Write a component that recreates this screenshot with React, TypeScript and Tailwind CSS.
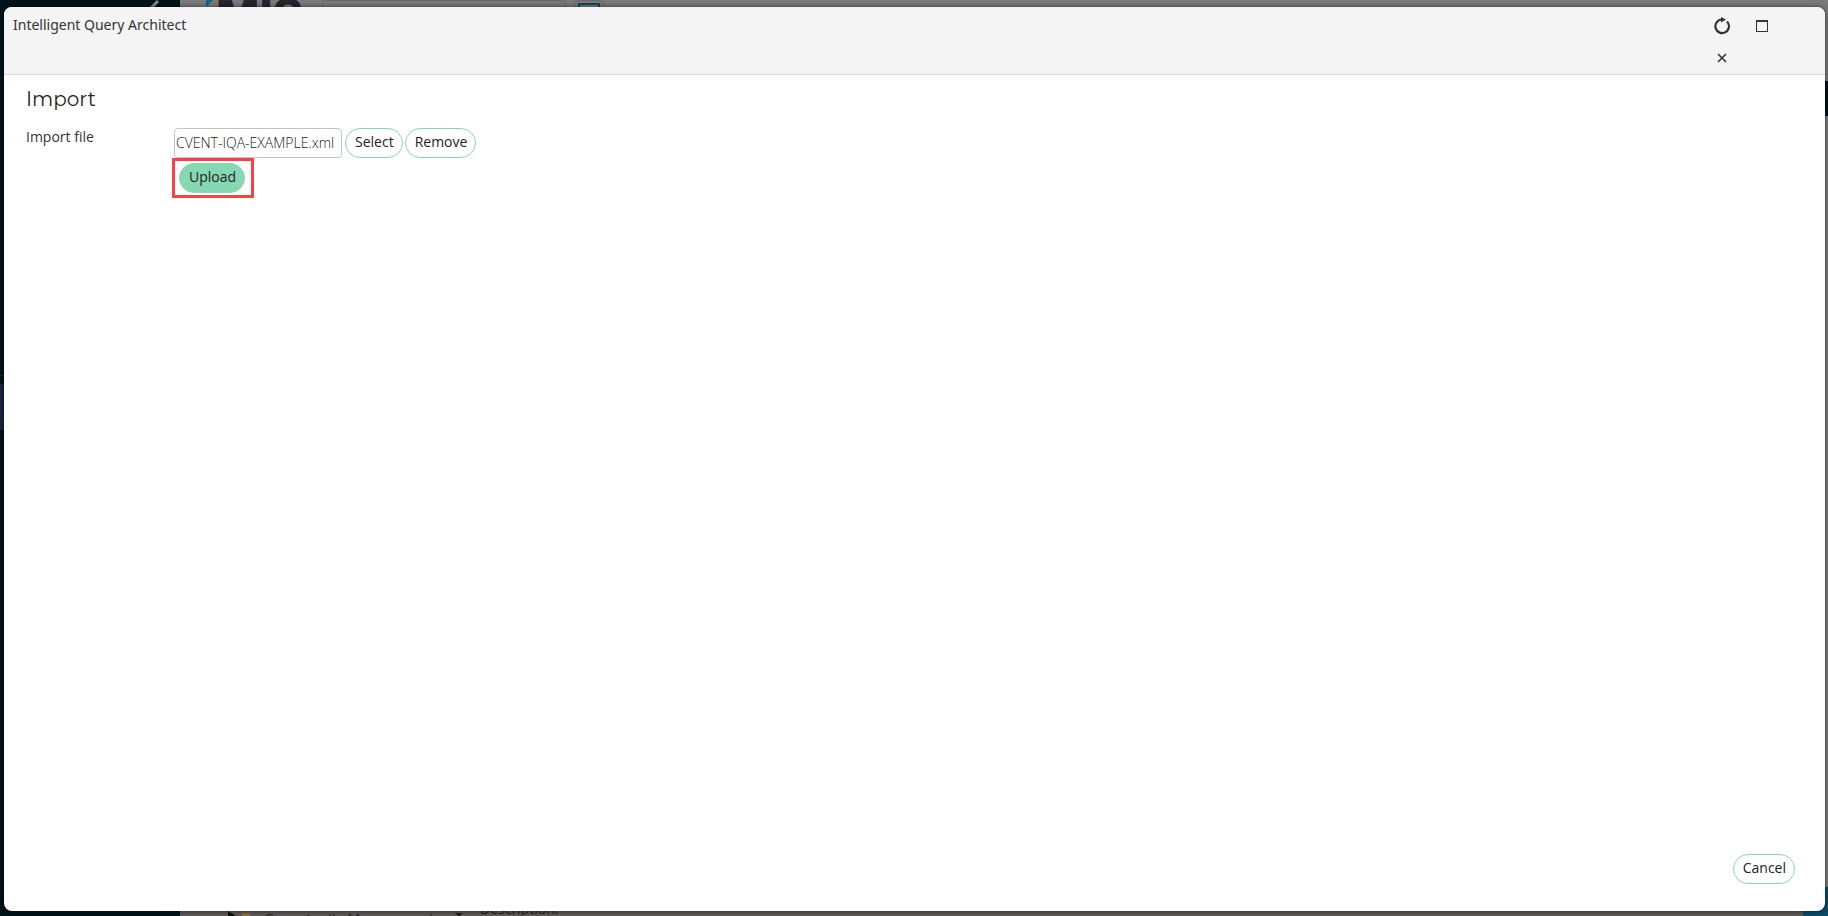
import type { ReactNode } from "react";

interface PillProps {
    children: ReactNode;
    filled?: boolean;
}

function PillButton({ children, filled = false }: PillProps) {
    return (
        <button
            type="button"
            className={`flex h-[30px] items-center rounded-full border border-[#86d8b3] pr-[8px] pb-[2px] pl-[9px] text-[14px] text-[#222] ${filled ? "bg-[#86d8b3]" : "bg-white"}`}
        >
            {children}
        </button>
    );
}

// The page that the dialog dims and covers; only its edges show.
function PageBehind() {
    return (
        <div className="absolute inset-0 flex bg-[#7a7a7a]" aria-hidden="true">
            <div className="flex w-[180px] flex-col bg-[#00131a]">
                <svg className="ml-[150px] h-[7px] w-[10px]" viewBox="0 0 10 7">
                    <path d="M8 1L1 8" stroke="#808a8e" strokeWidth="3" />
                </svg>
                <div className="h-[369px] border-[#1a2a30] border-b" />
                <div className="mt-[8px] h-[46px] bg-[#1e2442]" />
            </div>
            <div className="flex flex-1 flex-col justify-between overflow-hidden">
                <div className="flex h-[7px] items-start overflow-hidden">
                    <svg className="ml-[25px] h-[7px] w-[8px]" viewBox="0 0 8 7">
                        <path d="M1 0h7L1 7z" fill="#12658a" />
                    </svg>
                    <span className="-mt-[8px] ml-[3px] w-[92px] font-['Inter',sans-serif] font-extrabold text-[#25262d] text-[46px] leading-[46px]">MIS</span>
                    <div className="ml-[14px] h-[12px] w-[244px] shrink-0 rounded border border-[#686868]" />
                    <div className="ml-[8px] h-[12px] w-[30px] shrink-0 rounded border border-[#686868] px-[3px] pt-[2px]">
                        <div className="h-[8px] border-2 border-[#12495e]" />
                    </div>
                </div>
                <div className="flex h-[5px] items-start overflow-hidden bg-[#5c5858] pl-[48px] text-[#222] text-[14px] leading-[20px]">
                    <svg className="h-[5px] w-[30px]" viewBox="0 0 30 5">
                        <path d="M0 0l8 5H0z" fill="#111" />
                        <path d="M14 2h7l2 3h-9z" fill="#807438" />
                    </svg>
                    <span className="-mt-[2px] ml-[6px] w-[191px]">Opportunity Management</span>
                    <svg className="h-[5px] w-[8px]" viewBox="0 0 8 5">
                        <path d="M0 2h8L4 6z" fill="#222" />
                    </svg>
                    <span className="-mt-[12px] ml-[17px] font-medium">Description:</span>
                </div>
            </div>
            <div className="flex w-[25px] flex-col justify-between">
                <div className="mt-[81px] h-[35px] bg-[#00131a]" />
                <div className="h-[29px] bg-[#0a4b68]" />
            </div>
        </div>
    );
}

export default function App() {
    return (
        <div className="relative flex min-h-screen pt-[7px] pr-[3px] pb-[5px] pl-[4px] font-['Open_Sans',sans-serif] text-[14px] leading-[20px]">
            <PageBehind />
            <div role="dialog" aria-labelledby="dialog-title" className="relative flex flex-1 flex-col overflow-hidden rounded-lg bg-white shadow-[0_0_5px_rgba(0,0,0,0.6)]">
                <header className="flex h-[68px] justify-between border-[#d9d9d9] border-b bg-[#f4f4f4] pl-[9px]">
                    <h1 id="dialog-title" className="pt-[8px] font-['Noto_Sans',sans-serif] text-[#333]">
                        Intelligent Query Architect
                    </h1>
                    <div className="mt-px mr-[43px] grid h-[64px] w-[80px] grid-cols-2 text-[#333]">
                        <button type="button" aria-label="Reload" className="flex items-center justify-center">
                            <svg className="h-[18px] w-[18px]" viewBox="0 0 18 18" fill="none">
                                <path d="M14 4.5A6.8 6.8 0 1 1 9 2.5" stroke="currentColor" strokeWidth="2.2" />
                                <path d="M8 0l5 2.5-5 3z" fill="currentColor" />
                            </svg>
                        </button>
                        <button type="button" aria-label="Maximize" className="flex items-center justify-center">
                            <svg className="h-[12px] w-[12px]" viewBox="0 0 12 12">
                                <path d="M0 0h12v12H0zM1 2v9h10V2z" fill="currentColor" fillRule="evenodd" />
                            </svg>
                        </button>
                        <button type="button" aria-label="Close" className="flex items-center justify-center">
                            <svg className="h-[10px] w-[10px]" viewBox="0 0 10 10">
                                <path d="M1 1l8 8M9 1L1 9" stroke="currentColor" strokeWidth="1.6" />
                            </svg>
                        </button>
                    </div>
                </header>
                <main className="flex flex-1 flex-col pt-[9px] pr-[30px] pb-[27px] pl-[22px]">
                    <h2 className="font-['Montserrat','Open_Sans',sans-serif] text-[20px] text-[#222] leading-[30px]">Import</h2>
                    <div className="mt-[13px] flex">
                        <label htmlFor="import-file" className="w-[148px] font-medium text-[#333]">
                            Import file
                        </label>
                        <div className="pt-px">
                            <div className="flex gap-[2px]">
                                <input
                                    id="import-file"
                                    type="text"
                                    readOnly
                                    defaultValue="CVENT-IQA-EXAMPLE.xml"
                                    className="mr-px h-[30px] w-[168px] rounded border border-[#c4c4c4] px-px pb-[2px] font-light text-[#222]"
                                />
                                <PillButton>Select</PillButton>
                                <PillButton>Remove</PillButton>
                            </div>
                            <div className="-ml-[2px] inline-flex border-[#fa4144] border-[3px] py-[2px] pr-[6px] pl-[4px]">
                                <PillButton filled>Upload</PillButton>
                            </div>
                        </div>
                    </div>
                    <footer className="mt-auto flex justify-end">
                        <PillButton>Cancel</PillButton>
                    </footer>
                </main>
            </div>
        </div>
    );
}
